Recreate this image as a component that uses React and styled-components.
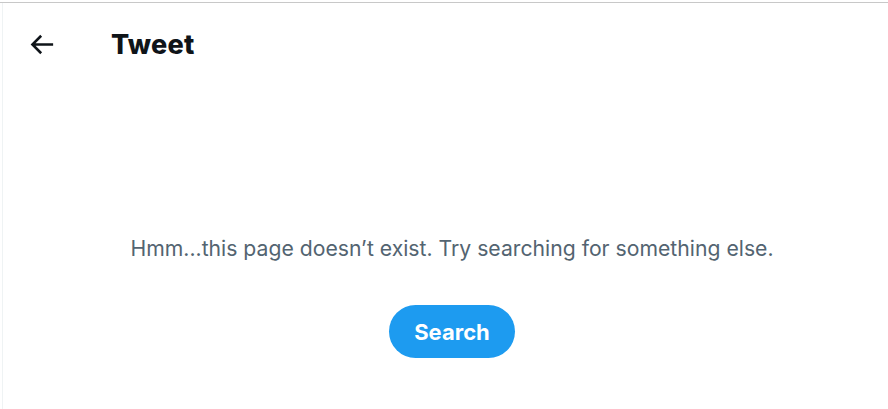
import React from "react";
import styled, { createGlobalStyle } from "styled-components";

const Global = createGlobalStyle`
  html, body { margin: 0; padding: 0; background: #fff; overflow: hidden; }
  body { font-family: "Inter", "Liberation Sans", sans-serif; }
`;

const Page = styled.div`
  width: 888px;
  height: 409px;
  overflow: hidden;
  background: #fff;
  border-top: 1px solid #c8c8c8;
  margin-top: 2px;
  box-sizing: border-box;
`;

const Column = styled.main`
  margin-left: 2px;
  width: 898px;
  height: 406px;
  border-left: 1px solid #eff3f4;
  display: flex;
  flex-direction: column;
`;

const Header = styled.header`
  display: flex;
  align-items: center;
  height: 54px;
  margin-top: 14px;
  padding: 0 0 0 23px;
`;

const BackButton = styled.button`
  width: 31px;
  height: 31px;
  padding: 0;
  border: none;
  background: transparent;
  display: flex;
  align-items: center;
  justify-content: center;
  color: #0f1419;
  margin-right: 54px;
  cursor: pointer;
`;

const Title = styled.h2`
  margin: 0;
  font-size: 27px;
  font-weight: 800;
  color: #0f1419;
  letter-spacing: 0.25px;
`;

const Body = styled.section`
  display: flex;
  flex-direction: column;
  align-items: center;
  padding-top: 163px;
`;

const Message = styled.span`
  font-size: 21.2px;
  color: #536471;
  line-height: 28px;
`;

const SearchButton = styled.button`
  margin-top: 43px;
  width: 126px;
  height: 53px;
  border: none;
  border-radius: 27px;
  background: #1d9bf0;
  color: #fff;
  font-family: "Inter", "Liberation Sans", sans-serif;
  font-size: 22px;
  font-weight: 700;
  cursor: pointer;
`;

export default function App() {
  return (
    <>
      <Global />
      <Page>
        <Column>
          <Header>
            <BackButton aria-label="Back">
              <svg viewBox="0 0 24 24" width="31" height="31" fill="currentColor">
                <path d="M7.414 13l5.043 5.04-1.414 1.42L3.586 12l7.457-7.46 1.414 1.42L7.414 11H21v2H7.414z" />
              </svg>
            </BackButton>
            <Title>Tweet</Title>
          </Header>
          <Body>
            <Message>Hmm...this page doesn’t exist. Try searching for something else.</Message>
            <SearchButton>Search</SearchButton>
          </Body>
        </Column>
      </Page>
    </>
  );
}
